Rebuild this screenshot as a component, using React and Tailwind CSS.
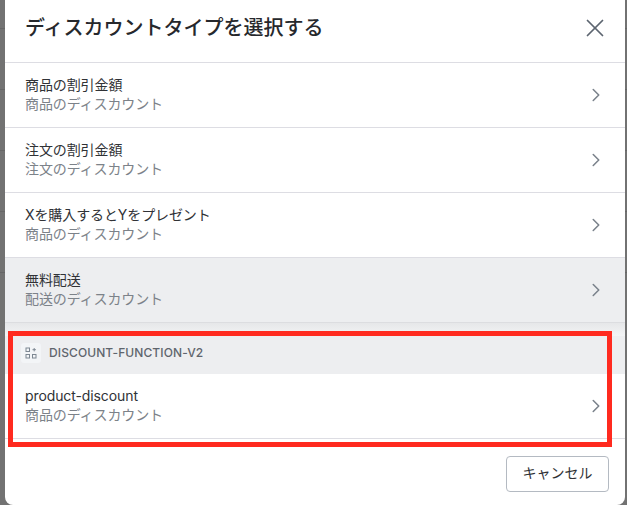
import { ChevronRight, X } from 'lucide-react';

const options = [
  { title: '商品の割引金額', sub: '商品のディスカウント' },
  { title: '注文の割引金額', sub: '注文のディスカウント' },
  { title: 'Xを購入するとYをプレゼント', sub: '商品のディスカウント' },
  { title: '無料配送', sub: '配送のディスカウント', active: true },
];

function Row({ title, sub, active }) {
  return (
    <div className={`flex h-[65px] shrink-0 items-center justify-between border-b pl-[20px] pr-[18px] ${active ? 'bg-[#edeef0] border-[#dcdde0]' : 'bg-white border-[#dddde3]'}`}>
      <div className="pb-[3px] text-[14px] leading-[19px] tracking-[-0.1px]">
        <div className="text-[#303236]">{title}</div>
        <div className="text-[#7c8289]">{sub}</div>
      </div>
      <ChevronRight size={22} strokeWidth={1.7} className="text-[#7a828b]" />
    </div>
  );
}

export default function App() {
  return (
    <div className="relative h-[505px] w-[627px] overflow-hidden bg-[#727272] bg-[repeating-linear-gradient(#727272_0,#727272_28px,#666666_28px,#666666_29px,#727272_29px,#727272_61px)] bg-[length:100%_300px] bg-no-repeat font-['Inter','Noto_Sans_CJK_JP',sans-serif]">
      <div className="ml-[5px] flex h-[505px] w-[620px] flex-col rounded-b-[8px] bg-white">
        {/* ヘッダー */}
        <div className="flex h-[63px] shrink-0 items-center justify-between border-b border-[#dddde3] pb-[6px] pl-[20px] pr-[15px]">
          <h1 className="text-[20px] font-medium leading-[28px] text-[#26282c]">ディスカウントタイプを選択する</h1>
          <X size={30} strokeWidth={1.4} className="text-[#5c6570]" />
        </div>

        {options.map(o => (
          <Row key={o.title} {...o} />
        ))}

        {/* アプリのディスカウント */}
        <div className="h-[13px] shrink-0 bg-[linear-gradient(#e6e7e9,#f3f4f5)]"></div>
        <div className="flex h-[38px] shrink-0 items-center gap-[8px] bg-[#edeef0] pb-[5px] pl-[16px]">
          <div className="flex h-[20px] w-[20px] items-center justify-center rounded-[3px] bg-[#f3f5f7]">
            <svg width="12" height="12" viewBox="0 0 12 12" fill="none" stroke="#7d8792" strokeWidth="1">
              <rect x="1" y="1" width="3.5" height="3.5" />
              <rect x="1" y="7.5" width="3.5" height="3.5" />
              <rect x="7.5" y="7.5" width="3.5" height="3.5" />
              <path d="M9.2 1v3.4M7.5 2.7h3.4" />
            </svg>
          </div>
          <span className="text-[12px] font-medium tracking-[0.1px] text-[#5f656d]">DISCOUNT-FUNCTION-V2</span>
        </div>
        <Row title="product-discount" sub="商品のディスカウント" />

        {/* フッター */}
        <div className="flex flex-1 items-start justify-end pr-[16px] pt-[17px]">
          <button className="h-[36px] w-[103px] rounded-[4px] border border-[#b4bac2] bg-white pb-[4px] text-[14px] text-[#2f3135]">キャンセル</button>
        </div>
      </div>

      {/* 赤枠 */}
      <div className="absolute left-[8px] top-[331px] h-[116px] w-[604px] border-[5px] border-[#ff2a1f]"></div>
    </div>
  );
}
